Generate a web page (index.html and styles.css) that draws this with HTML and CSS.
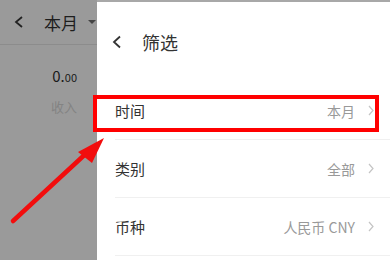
FILE: index.html
```html
<!DOCTYPE html>
<html lang="zh-CN">
<head>
    <meta charset="UTF-8">
    <meta name="viewport" content="width=device-width, initial-scale=1.0">
    <title>筛选</title>
    <link rel="stylesheet" href="styles.css">
</head>
<body>
    <div class="screen">
        <div class="backdrop">
            <div class="month-bar">
                <svg class="back" width="10" height="12" viewBox="0 0 10 12"><path d="M8 1 L2 6 L8 11" fill="none" stroke="#222" stroke-width="1.8"/></svg>
                <span class="month">本月</span>
                <span class="caret"></span>
            </div>
            <div class="stat">
                <div class="amount">0.<small>00</small></div>
                <div class="label">收入</div>
            </div>
        </div>

        <div class="panel">
            <div class="panel-head">
                <svg class="back" width="10" height="14" viewBox="0 0 10 14"><path d="M8 1.5 L2 7 L8 12.5" fill="none" stroke="#333" stroke-width="1.8"/></svg>
                <span class="title">筛选</span>
            </div>
            <div class="row">
                <span class="name">时间</span>
                <span class="value">本月</span>
                <svg class="more" width="6" height="11" viewBox="0 0 6 11"><path d="M1 1 L5 5.5 L1 10" fill="none" stroke="#c4c4c4" stroke-width="1.2"/></svg>
            </div>
            <div class="row">
                <span class="name">类别</span>
                <span class="value">全部</span>
                <svg class="more" width="6" height="11" viewBox="0 0 6 11"><path d="M1 1 L5 5.5 L1 10" fill="none" stroke="#c4c4c4" stroke-width="1.2"/></svg>
            </div>
            <div class="row">
                <span class="name">币种</span>
                <span class="value">人民币 CNY</span>
                <svg class="more" width="6" height="11" viewBox="0 0 6 11"><path d="M1 1 L5 5.5 L1 10" fill="none" stroke="#c4c4c4" stroke-width="1.2"/></svg>
            </div>
        </div>

        <!-- annotation -->
        <div class="highlight"></div>
        <svg class="arrow" width="120" height="100" viewBox="0 0 120 100">
            <line x1="13" y1="91" x2="92" y2="18" stroke="#f20d0d" stroke-width="4.5" stroke-linecap="round"/>
            <polygon points="104,8 78,22 92,33" fill="#f20d0d"/>
        </svg>
    </div>
</body>
</html>
```

FILE: styles.css
```css
body {
    margin: 0;
    font-family: "Noto Sans CJK SC", "Noto Sans", sans-serif;
    background: #999;
}

.screen {
    position: relative;
    width: 390px;
    height: 260px;
    display: flex;
    overflow: hidden;
}

.backdrop {
    width: 97px;
    background: #9a9a9a;
    flex-shrink: 0;
}

.month-bar {
    height: 44px;
    border-bottom: 1px solid #8c8c8c;
    display: flex;
    align-items: center;
    padding-left: 14px;
}

.month-bar .back {
    margin-right: 20px;
}

.month {
    font-size: 17px;
    color: #1e1e1e;
}

.caret {
    margin-left: 10px;
    border-left: 4px solid transparent;
    border-right: 4px solid transparent;
    border-top: 4px solid #444;
}

.stat {
    text-align: right;
    padding-right: 20px;
    padding-top: 21px;
}

.amount {
    font-size: 15px;
    color: #1a1a1a;
    line-height: 20px;
}

.amount small {
    font-size: 11px;
}

.label {
    font-size: 13px;
    color: #838383;
    margin-top: 10px;
}

.panel {
    flex: 1;
    background: #fff;
    border-top: 2px solid #a8a8a8;
}

.panel-head {
    height: 80px;
    display: flex;
    align-items: center;
    padding-left: 15px;
}

.panel-head .back {
    margin-right: 20px;
}

.title {
    font-size: 18px;
    color: #333;
}

.row {
    height: 57px;
    margin-left: 18px;
    padding-right: 16px;
    border-bottom: 1px solid #f0f0f0;
    display: flex;
    align-items: center;
}

.name {
    font-size: 15px;
    color: #333;
    flex: 1;
}

.value {
    font-size: 14px;
    color: #999;
    margin-right: 13px;
}

.highlight {
    position: absolute;
    left: 93px;
    top: 95px;
    width: 278px;
    height: 29px;
    border: 4px solid #f00;
}

.arrow {
    position: absolute;
    left: 0;
    top: 130px;
}
```
